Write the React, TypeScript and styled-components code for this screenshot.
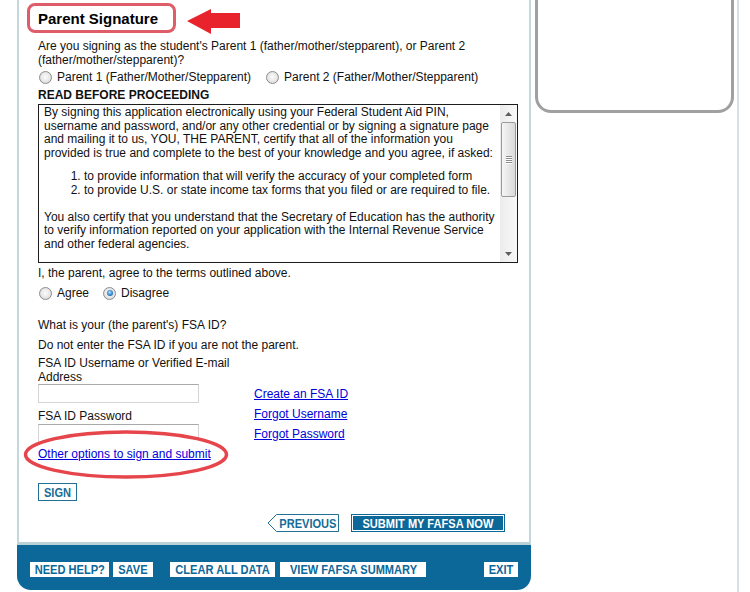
import React from "react";
import styled, { createGlobalStyle } from "styled-components";

const GlobalStyle = createGlobalStyle`
  html, body { margin: 0; padding: 0; background: #fff; }
  body {
    overflow: hidden;
    font-family: "Liberation Sans", Arial, sans-serif;
    font-size: 12px;
    color: #111;
  }
  * { box-sizing: border-box; }
`;

const BLUE = "#0b6898";
const BTN_BLUE = "#176d97";

const Page = styled.div`
  display: flex;
  align-items: flex-start;
  padding-left: 17px;
  height: 592px;
  overflow: hidden;
`;

const LeftColumn = styled.div`
  width: 514px;
  display: flex;
  flex-direction: column;
`;

const Panel = styled.main`
  position: relative;
  background: #fff;
  border-left: 2px solid #c4d9dd;
  border-right: 2px solid #c4d9dd;
  border-bottom: 3px solid #bad2d7;
  padding: 0 24px 10px 19px;
  display: flex;
  flex-direction: column;
  align-items: flex-start;
`;

const Title = styled.h2`
  margin: 10px 0 0;
  font-size: 15px;
  line-height: 18px;
  font-weight: bold;
  color: #000;
`;

const Para = styled.p<{ $mt?: number; $bold?: boolean }>`
  margin: ${(p) => p.$mt ?? 0}px 0 0;
  line-height: 14px;
  font-weight: ${(p) => (p.$bold ? "bold" : "normal")};
`;

const RadioGroup = styled.div<{ $mt?: number }>`
  display: flex;
  align-items: center;
  height: 16px;
  margin-top: ${(p) => p.$mt ?? 0}px;
  padding-left: 1px;
`;

const RadioOption = styled.label<{ $offset?: number }>`
  display: inline-flex;
  align-items: center;
  gap: 5px;
  margin-left: ${(p) => p.$offset ?? 0}px;
  line-height: 14px;
`;

const Radio = styled.span<{ $checked?: boolean }>`
  width: 13px;
  height: 13px;
  border-radius: 50%;
  border: 1px solid #8d8d8d;
  background: radial-gradient(circle at 50% 45%, #fbfbfb 0%, #ebebeb 45%, #cfcfcf 100%);
  display: inline-flex;
  align-items: center;
  justify-content: center;
  flex-shrink: 0;
  &::after {
    content: "";
    width: 6px;
    height: 6px;
    border-radius: 50%;
    display: ${(p) => (p.$checked ? "block" : "none")};
    background: radial-gradient(circle at 45% 40%, #bfe6ff 0%, #3f95dc 45%, #123f73 100%);
  }
`;

const TermsBox = styled.div`
  margin-top: 2px;
  width: 480px;
  height: 159px;
  border: 1px solid #1c1c1c;
  display: flex;
`;

const TermsText = styled.div`
  flex: 1;
  overflow: hidden;
  padding: 1px 4px 0 5px;
  line-height: 13.6px;
`;

const TermsPara = styled.p`
  margin: 0;
`;

const TermsList = styled.ol`
  margin: 10px 0 13px;
  padding-left: 40px;
`;

const ScrollBar = styled.div`
  width: 17px;
  display: flex;
  flex-direction: column;
  background: linear-gradient(to right, #ececec, #f8f8f8);
`;

const ScrollArrow = styled.div`
  height: 17px;
  display: flex;
  align-items: center;
  justify-content: center;
`;

const ScrollThumb = styled.div`
  height: 75px;
  margin: 0 1px;
  border: 1px solid #9a9a9a;
  border-radius: 2px;
  background: linear-gradient(to right, #f6f6f6, #e7e7e7 50%, #dadada);
  display: flex;
  flex-direction: column;
  align-items: center;
  justify-content: center;
  gap: 1px;
`;

const Grip = styled.span`
  width: 6px;
  height: 1px;
  background: #8a8a8a;
  box-shadow: 0 1px 0 #fff;
`;

const ScrollSpacer = styled.div`
  flex: 1;
`;

const FsaGrid = styled.div`
  display: grid;
  grid-template-columns: 216px auto;
  margin-top: 4px;
`;

const FsaFields = styled.div`
  display: flex;
  flex-direction: column;
  align-items: flex-start;
`;

const TextInput = styled.input<{ $mt?: number }>`
  width: 161px;
  height: 19px;
  margin: ${(p) => p.$mt ?? 0}px 0 0;
  padding: 0 2px;
  border: 1px solid #d4d4d4;
  border-top-color: #a9a9a9;
  background: #fff;
  font: inherit;
`;

const LinkList = styled.div`
  display: flex;
  flex-direction: column;
  align-items: flex-start;
  padding-top: 28px;
  line-height: 20px;
`;

const Link = styled.a`
  color: #0000dd;
  text-decoration: underline;
  cursor: pointer;
`;

const RaisedLink = styled(Link)`
  position: relative;
  z-index: 2;
  margin-top: 4px;
  line-height: 14px;
`;

/* condensed bold label used on all FAFSA buttons */
const BtnLabel = styled.span`
  display: inline-block;
  white-space: nowrap;
  font-family: "Liberation Sans", Arial, sans-serif;
  font-weight: bold;
  font-size: 13.5px;
  line-height: 15px;
  transform: scaleX(0.82);
  transform-origin: center;
`;

const BaseButton = styled.button`
  display: flex;
  align-items: center;
  justify-content: center;
  padding: 0;
  overflow: visible;
  cursor: pointer;
`;

const SignButton = styled(BaseButton)`
  margin-top: 22px;
  height: 18px;
  width: 39px;
  border: 1px solid #226f94;
  background: #fff;
  color: ${BTN_BLUE};
`;

const ActionRow = styled.div`
  align-self: stretch;
  display: flex;
  justify-content: flex-end;
  gap: 12px;
  margin-top: 13px;
`;

const PrevButton = styled(BaseButton)`
  position: relative;
  width: 72px;
  height: 18px;
  padding-left: 10px;
  border: none;
  background: transparent;
  color: ${BTN_BLUE};
  & > svg {
    position: absolute;
    inset: 0;
  }
  & > span {
    position: relative;
  }
`;

const SubmitButton = styled(BaseButton)`
  width: 154px;
  height: 18px;
  border: 1px solid ${BLUE};
  box-shadow: inset 0 0 0 1px #fff;
  background: ${BLUE};
  color: #fff;
`;

const Footer = styled.footer`
  height: 45px;
  background: ${BLUE};
  border-radius: 0 0 14px 14px;
  display: flex;
  align-items: flex-start;
  padding: 17px 13px 0 13px;
`;

const FooterButton = styled(BaseButton)<{ $ml?: number; $auto?: boolean; $w: number }>`
  width: ${(p) => p.$w}px;
  height: 15px;
  margin-left: ${(p) => (p.$auto ? "auto" : `${p.$ml ?? 0}px`)};
  border: none;
  background: #fff;
  color: ${BLUE};
`;

const RightColumn = styled.aside`
  width: 208px;
  height: 592px;
  border-right: 2px solid #d5e2e5;
  padding-left: 4px;
`;

const SideBox = styled.div`
  margin-top: -30px;
  width: 199px;
  height: 143px;
  border: 3px solid #a0a0a0;
  border-radius: 16px;
`;

const TitleHighlight = styled.div`
  position: absolute;
  left: 8px;
  top: 3px;
  width: 149px;
  height: 30px;
  border: 3px solid #df5d69;
  border-radius: 8px;
  pointer-events: none;
`;

const ArrowMark = styled.svg`
  position: absolute;
  left: 168px;
  top: 9px;
  pointer-events: none;
`;

const EllipseMark = styled.svg`
  position: absolute;
  left: 4px;
  top: 430px;
  z-index: 1;
  pointer-events: none;
`;

export default function App() {
  return (
    <>
      <GlobalStyle />
      <Page>
        <LeftColumn>
          <Panel>
            <Title>Parent Signature</Title>
            <Para $mt={11}>
              Are you signing as the student's Parent 1 (father/mother/stepparent), or Parent 2
              <br />
              (father/mother/stepparent)?
            </Para>
            <RadioGroup $mt={2}>
              <RadioOption>
                <Radio />
                Parent 1 (Father/Mother/Stepparent)
              </RadioOption>
              <RadioOption $offset={15}>
                <Radio />
                Parent 2 (Father/Mother/Stepparent)
              </RadioOption>
            </RadioGroup>
            <Para $mt={3} $bold>
              READ BEFORE PROCEEDING
            </Para>
            <TermsBox>
              <TermsText>
                <TermsPara>
                  By signing this application electronically using your Federal Student Aid PIN,
                  <br />
                  username and password, and/or any other credential or by signing a signature page
                  <br />
                  and mailing it to us, YOU, THE PARENT, certify that all of the information you
                  <br />
                  provided is true and complete to the best of your knowledge and you agree, if asked:
                </TermsPara>
                <TermsList>
                  <li>to provide information that will verify the accuracy of your completed form</li>
                  <li>to provide U.S. or state income tax forms that you filed or are required to file.</li>
                </TermsList>
                <TermsPara>
                  You also certify that you understand that the Secretary of Education has the authority
                  <br />
                  to verify information reported on your application with the Internal Revenue Service
                  <br />
                  and other federal agencies.
                </TermsPara>
              </TermsText>
              <ScrollBar>
                <ScrollArrow>
                  <svg width="7" height="4" viewBox="0 0 7 4">
                    <path d="M0 4 L3.5 0 L7 4 Z" fill="#5e5e5e" />
                  </svg>
                </ScrollArrow>
                <ScrollThumb>
                  <Grip />
                  <Grip />
                  <Grip />
                  <Grip />
                </ScrollThumb>
                <ScrollSpacer />
                <ScrollArrow>
                  <svg width="7" height="4" viewBox="0 0 7 4">
                    <path d="M0 0 L7 0 L3.5 4 Z" fill="#5e5e5e" />
                  </svg>
                </ScrollArrow>
              </ScrollBar>
            </TermsBox>
            <Para $mt={3}>I, the parent, agree to the terms outlined above.</Para>
            <RadioGroup $mt={5}>
              <RadioOption>
                <Radio />
                Agree
              </RadioOption>
              <RadioOption $offset={14}>
                <Radio $checked />
                Disagree
              </RadioOption>
            </RadioGroup>
            <Para $mt={17}>What is your (the parent's) FSA ID?</Para>
            <Para $mt={6}>Do not enter the FSA ID if you are not the parent.</Para>
            <FsaGrid>
              <FsaFields>
                <Para>
                  FSA ID Username or Verified E-mail
                  <br />
                  Address
                </Para>
                <TextInput type="text" aria-label="FSA ID Username or Verified E-mail Address" />
                <Para $mt={6}>FSA ID Password</Para>
                <TextInput $mt={1} type="password" aria-label="FSA ID Password" />
                <RaisedLink>Other options to sign and submit</RaisedLink>
              </FsaFields>
              <LinkList>
                <Link>Create an FSA ID</Link>
                <Link>Forgot Username</Link>
                <Link>Forgot Password</Link>
              </LinkList>
            </FsaGrid>
            <SignButton>
              <BtnLabel>SIGN</BtnLabel>
            </SignButton>
            <ActionRow>
              <PrevButton>
                <svg width="72" height="18" viewBox="0 0 72 18">
                  <path d="M71.5 0.5 H9.5 L1 9 L9.5 17.5 H71.5 Z" fill="#fff" stroke="#226f94" strokeWidth="1" />
                </svg>
                <BtnLabel>PREVIOUS</BtnLabel>
              </PrevButton>
              <SubmitButton>
                <BtnLabel>SUBMIT MY FAFSA NOW</BtnLabel>
              </SubmitButton>
            </ActionRow>

            <TitleHighlight />
            <ArrowMark width="54" height="26" viewBox="0 0 54 26">
              <polygon points="0,12 24,0 24,4 53,4 53,19 24,19 24,25" fill="#e8232b" />
            </ArrowMark>
            <EllipseMark width="206" height="49" viewBox="0 0 206 49">
              <ellipse cx="103" cy="24.5" rx="100.5" ry="22.5" fill="#fff" stroke="#e6454c" strokeWidth="3.5" />
            </EllipseMark>
          </Panel>
          <Footer>
            <FooterButton $w={79}>
              <BtnLabel>NEED HELP?</BtnLabel>
            </FooterButton>
            <FooterButton $w={40} $ml={4}>
              <BtnLabel>SAVE</BtnLabel>
            </FooterButton>
            <FooterButton $w={105} $ml={17}>
              <BtnLabel>CLEAR ALL DATA</BtnLabel>
            </FooterButton>
            <FooterButton $w={146} $ml={5}>
              <BtnLabel>VIEW FAFSA SUMMARY</BtnLabel>
            </FooterButton>
            <FooterButton $w={34} $auto>
              <BtnLabel>EXIT</BtnLabel>
            </FooterButton>
          </Footer>
        </LeftColumn>
        <RightColumn>
          <SideBox />
        </RightColumn>
      </Page>
    </>
  );
}
